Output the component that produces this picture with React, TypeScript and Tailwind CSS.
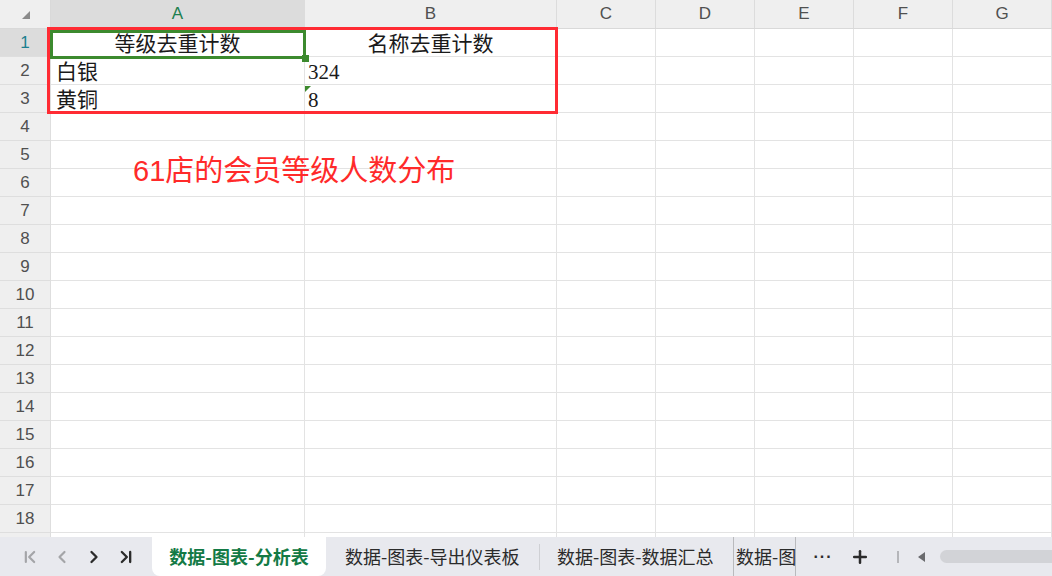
import { ChevronFirst, ChevronLast, ChevronLeft, ChevronRight, Plus } from 'lucide-react'

const COLS = [
  { key: 'A', w: 'w-[254px]' },
  { key: 'B', w: 'w-[252px]' },
  { key: 'C', w: 'w-[99px]' },
  { key: 'D', w: 'w-[99px]' },
  { key: 'E', w: 'w-[99px]' },
  { key: 'F', w: 'w-[99px]' },
  { key: 'G', w: 'w-[99px]' },
]

const DATA: Record<number, string[]> = {
  1: ['等级去重计数', '名称去重计数'],
  2: ['白银', '324'],
  3: ['黄铜', '8'],
}

const ROWS = Array.from({ length: 19 }, (_, i) => i + 1)

const cellFont = { fontFamily: '"Liberation Serif", "Noto Sans CJK SC", serif' }
const uiFont = { fontFamily: '"Liberation Sans", "Noto Sans CJK SC", sans-serif' }

function HeaderRow() {
  return (
    <div className="flex h-[29px] shrink-0 bg-[#efefef] border-b border-[#d9d9d9]" style={uiFont}>
      <div className="w-[51px] shrink-0 flex items-center justify-center border-r border-[#d9d9d9]">
        <div className="w-0 h-0 border-l-[8px] border-l-transparent border-b-[8px] border-b-[#8a8a8a] ml-[2px] mt-[2px]" />
      </div>
      {COLS.map((c) => (
        <div
          key={c.key}
          className={`${c.w} shrink-0 flex items-center justify-center border-r border-[#dcdcdc] text-[17px] ${
            c.key === 'A' ? 'bg-[#dcdcdc] text-[#1d7f4f]' : 'text-[#505050]'
          }`}
        >
          {c.key}
        </div>
      ))}
    </div>
  )
}

function Row({ n }: { n: number }) {
  const vals = DATA[n] || []
  return (
    <div className="flex h-[28px] shrink-0">
      <div
        className={`w-[51px] shrink-0 flex items-center justify-center pt-[1px] border-r border-b border-[#dedede] text-[17px] ${
          n === 1 ? 'bg-[#dcdcdc] text-[#1d7f8f]' : 'bg-[#efefef] text-[#505050]'
        }`}
        style={uiFont}
      >
        {n < 19 ? n : ''}
      </div>
      {COLS.map((c, i) => (
        <div
          key={c.key}
          className={`${c.w} shrink-0 flex items-center pt-[4px] border-r border-b border-[#e3e3e3] bg-white text-[21px] text-[#1a1a1a] leading-none overflow-hidden whitespace-nowrap ${
            n === 1 ? 'justify-center' : i === 1 ? 'pl-[3px]' : 'pl-[5px]'
          }`}
          style={cellFont}
        >
          {vals[i] ?? ''}
        </div>
      ))}
    </div>
  )
}

function Sheet() {
  return (
    <div className="relative flex-1 overflow-hidden flex flex-col">
      <HeaderRow />
      {ROWS.map((n) => (
        <Row key={n} n={n} />
      ))}

      {/* red annotation box */}
      <div className="absolute left-[47px] top-[27px] w-[511px] h-[87px] border-[3px] border-[#ff2b33] pointer-events-none" />
      {/* active cell */}
      <div className="absolute left-[50px] top-[30px] w-[256px] h-[29px] border-[3px] border-[#3c8a2e] pointer-events-none" />
      <div className="absolute left-[302px] top-[55px] w-[7px] h-[7px] bg-[#3c8a2e]" />
      <div className="absolute left-[305px] top-[86px] w-0 h-0 border-t-[6px] border-t-[#3c8a2e] border-r-[6px] border-r-transparent" />

      {/* floating text */}
      <div
        className="absolute left-[133px] top-[157px] text-[29px] leading-none text-[#ff2a2a] whitespace-nowrap"
        style={uiFont}
      >
        61店的会员等级人数分布
      </div>
    </div>
  )
}

function TabBar() {
  return (
    <div
      className="h-[39px] shrink-0 bg-[#e8e9ee] flex items-start text-[18px] text-[#2b2b2b] whitespace-nowrap"
      style={{ fontFamily: '"Noto Sans CJK SC", sans-serif' }}
    >
      <div className="flex items-center h-[39px] pl-[20px] gap-[12px] w-[152px] shrink-0">
        <ChevronFirst size={20} strokeWidth={2.6} className="text-[#a4a5a8]" />
        <ChevronLeft size={20} strokeWidth={2.6} className="text-[#a4a5a8]" />
        <ChevronRight size={20} strokeWidth={2.8} className="text-[#2b2b2b]" />
        <ChevronLast size={20} strokeWidth={2.8} className="text-[#2b2b2b]" />
      </div>
      <div className="h-[39px] w-[174px] shrink-0 bg-white rounded-b-[8px] flex items-center justify-center font-bold text-[#137a45]">
        数据-图表-分析表
      </div>
      <div className="h-[39px] w-[213px] shrink-0 flex items-center pl-[19px]">数据-图表-导出仪表板</div>
      <div className="w-px h-[26px] shrink-0 bg-[#cfd0d4] mt-[7px]" />
      <div className="h-[39px] w-[193px] shrink-0 flex items-center pl-[17px]">数据-图表-数据汇总</div>
      <div className="h-[39px] w-[63px] shrink-0 flex items-center border-x border-[#b9babd]">
        <span className="pl-[2px]">数据-图</span>
      </div>
      <div className="h-[39px] w-[54px] shrink-0 flex items-center justify-center text-[#2b2b2b] text-[16px] tracking-[1px] font-bold" style={uiFont}>
        ···
      </div>
      <div className="h-[39px] flex items-center">
        <Plus size={20} strokeWidth={3} className="text-[#2b2b2b]" />
      </div>
      <div className="h-[39px] flex items-center pl-[27px]">
        <div className="w-[2px] h-[12px] bg-[#b5b6ba]" />
      </div>
      <div className="h-[39px] flex items-center pl-[19px]">
        <div className="w-0 h-0 border-y-[5px] border-y-transparent border-r-[7px] border-r-[#6a6b6e]" />
      </div>
      <div className="h-[39px] flex items-center pl-[15px] flex-1">
        <div className="h-[13px] w-full bg-[#d2d3d7] rounded-l-full" />
      </div>
    </div>
  )
}

export default function App() {
  return (
    <div className="w-[1052px] h-[576px] flex flex-col bg-white overflow-hidden">
      <Sheet />
      <TabBar />
    </div>
  )
}
